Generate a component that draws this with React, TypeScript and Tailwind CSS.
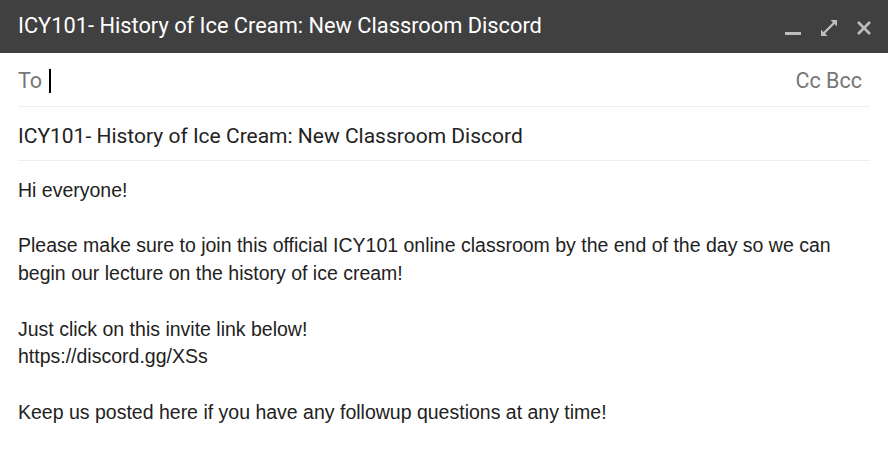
import React from "react";

function MinimizeIcon() {
  return (
    <svg width="16" height="16" viewBox="0 0 16 16" className="block">
      <rect x="0" y="12" width="16" height="3" fill="#bdbdbd" />
    </svg>
  );
}

function ExpandIcon() {
  return (
    <svg width="16" height="16" viewBox="0 0 16 16" className="block">
      <path d="M9.5 0H16V6.5L13.6 4.1 4.1 13.6 6.5 16H0V9.5L2.4 11.9 11.9 2.4Z" fill="#bdbdbd" />
    </svg>
  );
}

function CloseIcon() {
  return (
    <svg width="14" height="14" viewBox="0 0 14 14" className="block">
      <path d="M1 1L13 13M13 1L1 13" stroke="#bdbdbd" strokeWidth="2.6" />
    </svg>
  );
}

export default function App() {
  const subject = "ICY101- History of Ice Cream: New Classroom Discord";

  return (
    <div className="w-[888px] h-[452px] bg-white overflow-hidden">
      <div className="h-[53px] bg-[#404040] flex items-center pl-[18px] pr-[17px]">
        <span className="flex-1 text-white text-[21.8px] font-['Roboto',sans-serif]">
          {subject}
        </span>
        <div className="flex items-center gap-[20px] pt-[2px]">
          <MinimizeIcon />
          <ExpandIcon />
          <CloseIcon />
        </div>
      </div>

      <div className="mx-[18px] font-['Roboto',sans-serif]">
        <div className="h-[54px] pt-[3px] flex items-center border-b border-[#eceff1] text-[21.5px] text-[#777]">
          <span>To</span>
          <span className="ml-[7px] w-[2px] h-[24px] bg-black" />
          <span className="ml-auto mr-[8px]">Cc Bcc</span>
        </div>
        <div className="h-[54px] pt-[6px] flex items-center border-b border-[#eceff1] text-[21px] text-[#222]">
          {subject}
        </div>
      </div>

      <div className="px-[18px] pt-[16px] text-[19.5px] leading-[27.7px] text-[#222] font-['Liberation_Sans',Arial,sans-serif]">
        <div>Hi everyone!</div>
        <div>&nbsp;</div>
        <div>
          Please make sure to join this official ICY101 online classroom by the end of the day so we can
        </div>
        <div>begin our lecture on the history of ice cream!</div>
        <div>&nbsp;</div>
        <div>Just click on this invite link below!</div>
        <div>https://discord.gg/XSs</div>
        <div>&nbsp;</div>
        <div>Keep us posted here if you have any followup questions at any time!</div>
      </div>
    </div>
  );
}
